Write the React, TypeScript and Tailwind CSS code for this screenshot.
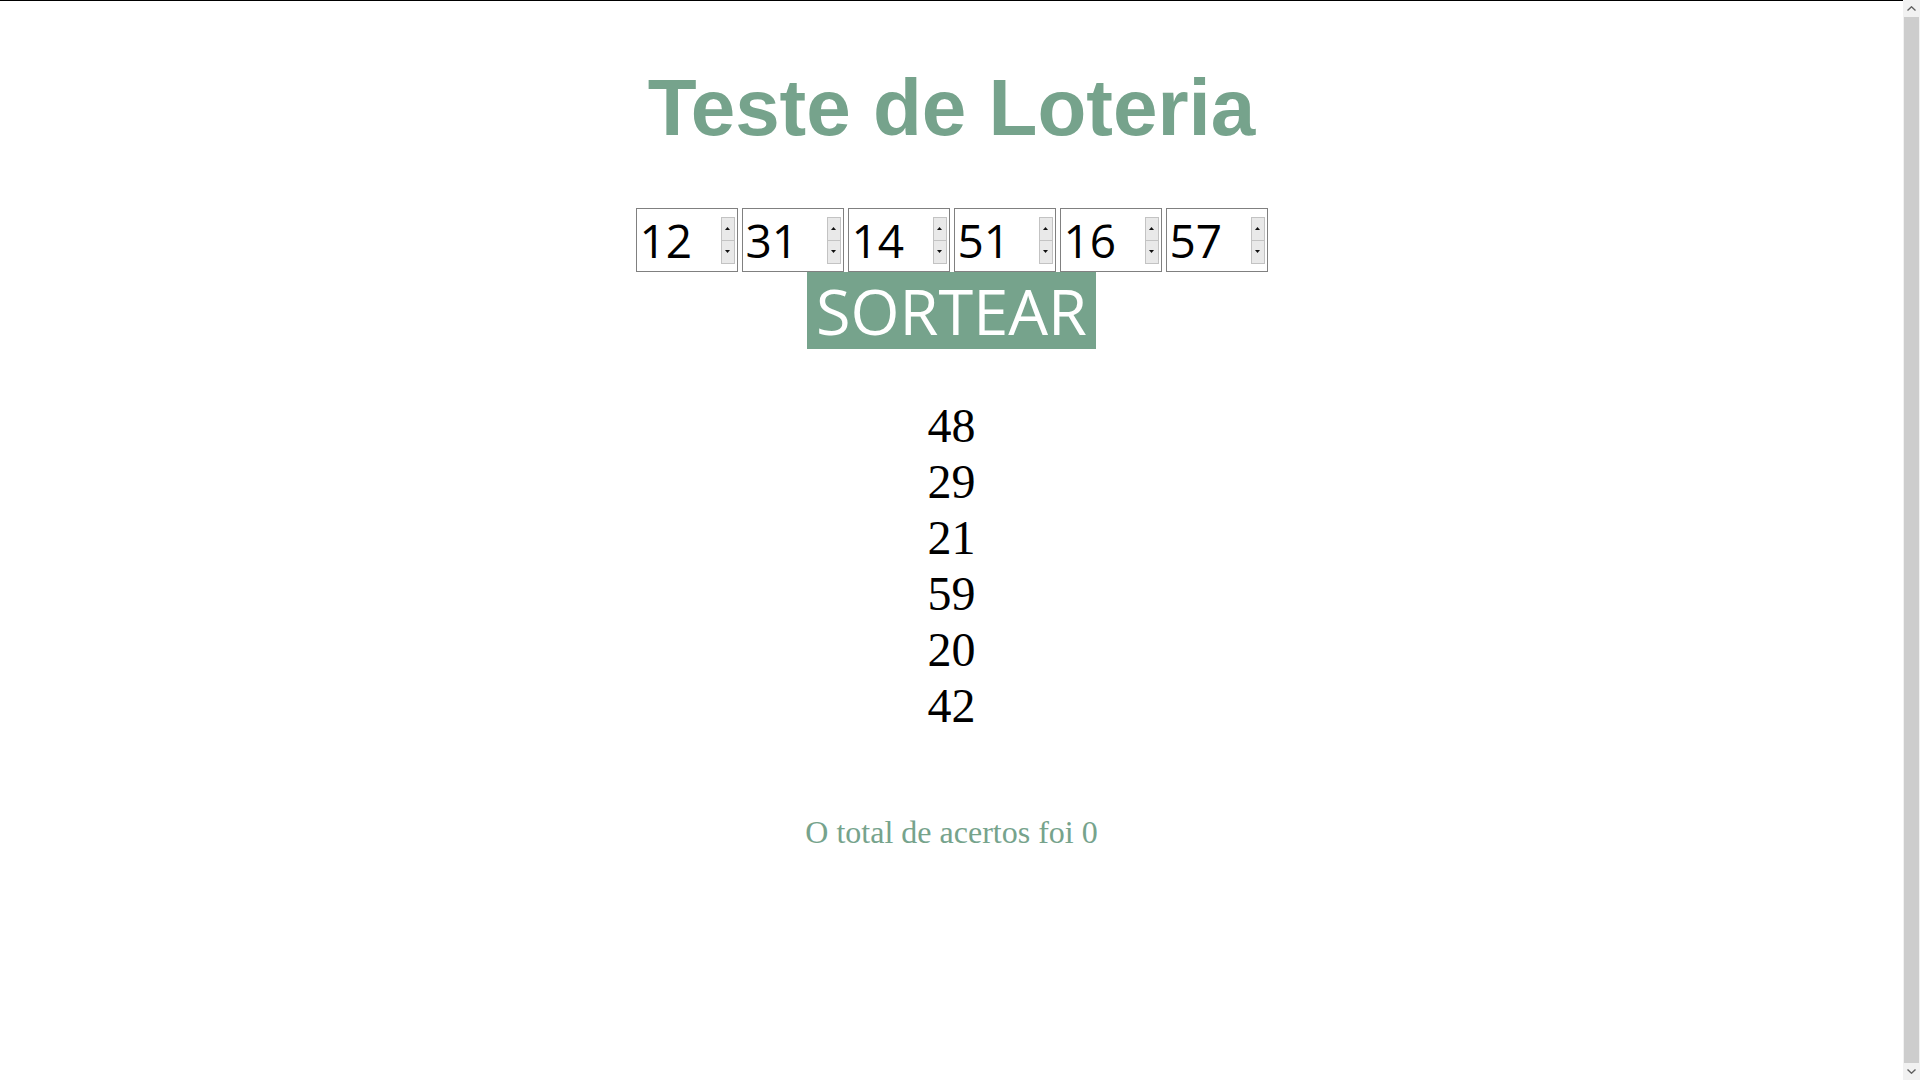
import React from "react";

const GREEN = "text-[#76a38c]";

const picks = [12, 31, 14, 51, 16, 57];
const drawn = [48, 29, 21, 59, 20, 42];

const Spinner = () => (
  <div className="flex h-[47px] w-[14px] flex-col">
    <div className="flex flex-1 items-center justify-center border border-[#c3c3c3] bg-[#e9e9e9]">
      <svg width="5" height="3" viewBox="0 0 5 3">
        <path d="M2.5 0 L5 3 L0 3 Z" fill="#111" />
      </svg>
    </div>
    <div className="flex flex-1 items-center justify-center border border-t-0 border-[#c3c3c3] bg-[#e9e9e9]">
      <svg width="5" height="3" viewBox="0 0 5 3">
        <path d="M0 0 L5 0 L2.5 3 Z" fill="#111" />
      </svg>
    </div>
  </div>
);

const NumberBox = ({ value }: { value: number }) => (
  <div className="flex h-[64px] w-[102px] items-center border border-[#808080] bg-white pr-[2px]">
    <input
      readOnly
      value={value}
      className="w-full min-w-0 flex-1 bg-transparent pl-[3px] font-['Open_Sans',sans-serif] text-[46px] leading-[62px] text-black outline-none"
    />
    <Spinner />
  </div>
);

const Scrollbar = () => (
  <div className="fixed right-0 top-0 flex h-screen w-[17px] flex-col bg-[#f1f1f1]">
    <div className="flex h-[17px] items-center justify-center">
      <svg width="9" height="5" viewBox="0 0 9 5">
        <path d="M0.5 4.5 L4.5 0.8 L8.5 4.5" fill="none" stroke="#606060" strokeWidth="1.4" />
      </svg>
    </div>
    <div className="mx-[1px] flex-1 bg-[#cdcdcd]" />
    <div className="flex h-[17px] items-center justify-center">
      <svg width="9" height="5" viewBox="0 0 9 5">
        <path d="M0.5 0.5 L4.5 4.2 L8.5 0.5" fill="none" stroke="#606060" strokeWidth="1.4" />
      </svg>
    </div>
  </div>
);

export default function App() {
  return (
    <div className="h-screen overflow-hidden bg-white">
      <main className="flex h-screen w-[calc(100%-17px)] flex-col items-center border-t border-black pt-[61px]">
        <h1 className={`font-['Liberation_Sans',Arial,sans-serif] text-[80px] font-bold leading-[92px] ${GREEN}`}>
          Teste de Loteria
        </h1>

        <div className="mt-[54px] flex gap-[4px]">
          {picks.map((n, i) => (
            <NumberBox key={i} value={n} />
          ))}
        </div>

        <button className="h-[77px] w-[289px] bg-[#76a38c] font-['Open_Sans',sans-serif] text-[63px] leading-[77px] text-white">
          SORTEAR
        </button>

        <div className="mt-[49px] flex flex-col items-center font-['Liberation_Serif','Times_New_Roman',serif] text-[48px] leading-[56px] text-black">
          {drawn.map((n, i) => (
            <span key={i}>{n}</span>
          ))}
        </div>

        <p className={`mt-[80px] font-['Liberation_Serif','Times_New_Roman',serif] text-[32px] leading-[37px] ${GREEN}`}>
          O total de acertos foi 0
        </p>
      </main>
      <Scrollbar />
    </div>
  );
}
